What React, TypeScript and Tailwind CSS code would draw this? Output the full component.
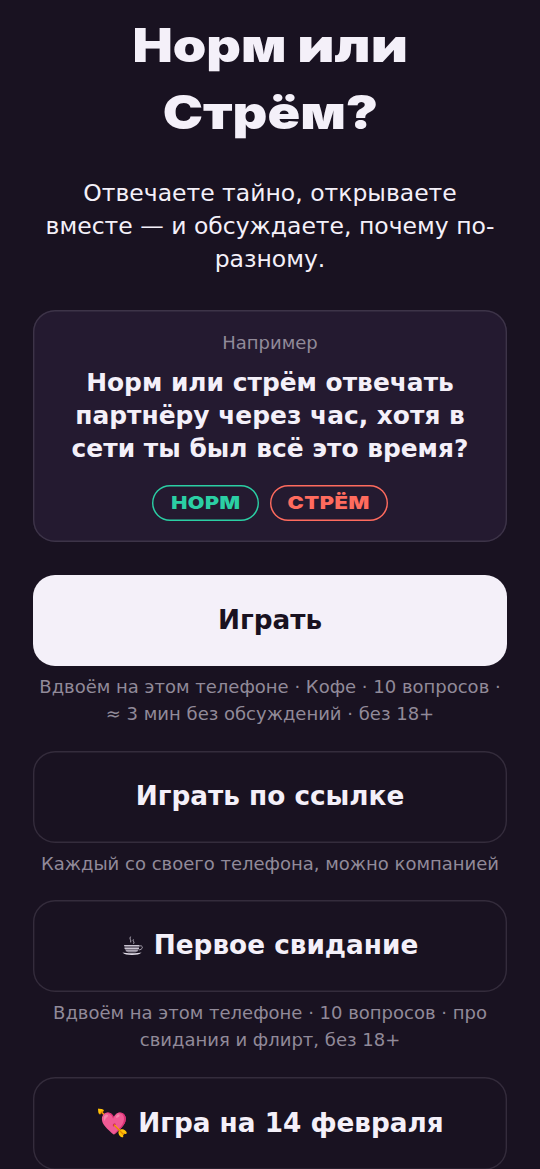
import type { ReactNode } from "react";

function CoffeeIcon() {
  return (
    <svg viewBox="0 0 22 20" className="mr-[10px] h-5 w-[22px]" fill="none" stroke="#c9c3d0">
      <path d="M8.600 .6c-1.800 2 .9 3.400.1 5.800M11.400 3.400c-1.200 1.400 1.500 2.400.2 4.400" strokeWidth="1" opacity="0.85" />
      <path d="M2.200 9c.1 4 1.700 6.600 4 7.600h7.200c2.300-1 3.800-3.600 3.900-7.600z" fill="#77707f" stroke="none" />
      <path d="M2.200 9.500h15.200M2.600 12.500h14.400" strokeWidth="1" />
      <path d="M3.800 14.800h12" strokeWidth="0.9" />
      <path d="M17.300 10.200c1.600-.9 3.200-.2 3 1.400-.2 1.500-1.900 2.300-3.700 2.300" strokeWidth="1" opacity="0.8" />
      <path d="M.4 16.600c2 1.900 5 2.400 9.600 2.400s7.500-.5 9.600-2.400c-3 .9-16.200.9-19.200 0z" fill="#e4deea" stroke="none" />
    </svg>
  );
}

function Pill({ children, tone }: { children: ReactNode; tone: string }) {
  return (
    <span className={`flex h-9 items-center justify-center rounded-full pt-px font-['Inter'] text-[17.3px] font-black tracking-[0.4px] ${tone}`}>
      {children}
    </span>
  );
}

function Choice({ label, hint, primary, gap }: { label: ReactNode; hint?: string; primary?: boolean; gap: string }) {
  return (
    <section className={`text-center ${gap}`}>
      <button
        className={`flex w-full items-center justify-center rounded-[22px] text-[26.3px] font-bold whitespace-pre ${
          primary ? "h-[91px] bg-[#f4f0f9] pt-0.5 text-[#191221]" : "h-[92.5px] text-[#f4f0f9] shadow-[inset_0_0_0_1.4px_#342c3c]"
        }`}
      >
        {label}
      </button>
      {hint && <p className="mt-[7px] text-[18px] leading-[27px] whitespace-pre-line text-[#918a99]">{hint}</p>}
    </section>
  );
}

export default function App() {
  return (
    <main className="h-[1169px] overflow-hidden bg-[#191221] px-[33px] font-['DejaVu_Sans','Noto_Color_Emoji',sans-serif] text-[#f4f0f9]">
      <h1 className="flex flex-col items-center pt-3 font-['Inter'] text-[46.3px] leading-[66.5px] font-black whitespace-nowrap">
        <span className="flex gap-[32px] pl-px">
          <span className="scale-x-[1.16]">Норм</span>
          <span className="scale-x-[1.24]">или</span>
        </span>
        <span className="scale-x-[1.165]">Стрём?</span>
      </h1>

      <p className="mt-[32px] text-center text-[23.5px] leading-[33.2px] whitespace-pre-line">
        {"Отвечаете тайно, открываете\nвместе — и обсуждаете, почему по-\nразному."}
      </p>

      <section className="mt-[33px] flex h-[232px] flex-col items-center rounded-[22px] bg-[#241a30] pt-[19px] text-center shadow-[inset_0_0_0_1.4px_#3d3448]">
        <p className="text-[18px] leading-[27px] text-[#918a99]">Например</p>
        <p className="mt-[10px] text-[24.9px] leading-[33.2px] font-bold whitespace-pre-line">
          {"Норм или стрём отвечать\nпартнёру через час, хотя в\nсети ты был всё это время?"}
        </p>
        <div className="mt-[19.4px] flex gap-[11px]">
          <Pill tone="w-[107px] text-[#2bcfa4] shadow-[inset_0_0_0_1.4px_#2bcfa4]">
            <span className="scale-x-[1.24]">НОРМ</span>
          </Pill>
          <Pill tone="w-[118px] text-[#ff6b5e] shadow-[inset_0_0_0_1.4px_#ff6b5e]">
            <span className="scale-x-[1.26]">СТРЁМ</span>
          </Pill>
        </div>
      </section>

      <Choice primary gap="mt-[33px]" label="Играть" hint={"Вдвоём на этом телефоне · Кофе · 10 вопросов ·\n≈ 3 мин без обсуждений · без 18+"} />
      <Choice gap="mt-[24px]" label="Играть по ссылке" hint="Каждый со своего телефона, можно компанией" />
      <Choice gap="mt-[22.8px]" label={<><CoffeeIcon />Первое свидание</>} hint={"Вдвоём на этом телефоне · 10 вопросов · про\nсвидания и флирт, без 18+"} />
      <Choice gap="mt-[23.6px]" label="💘 Игра на 14 февраля" />
    </main>
  );
}
